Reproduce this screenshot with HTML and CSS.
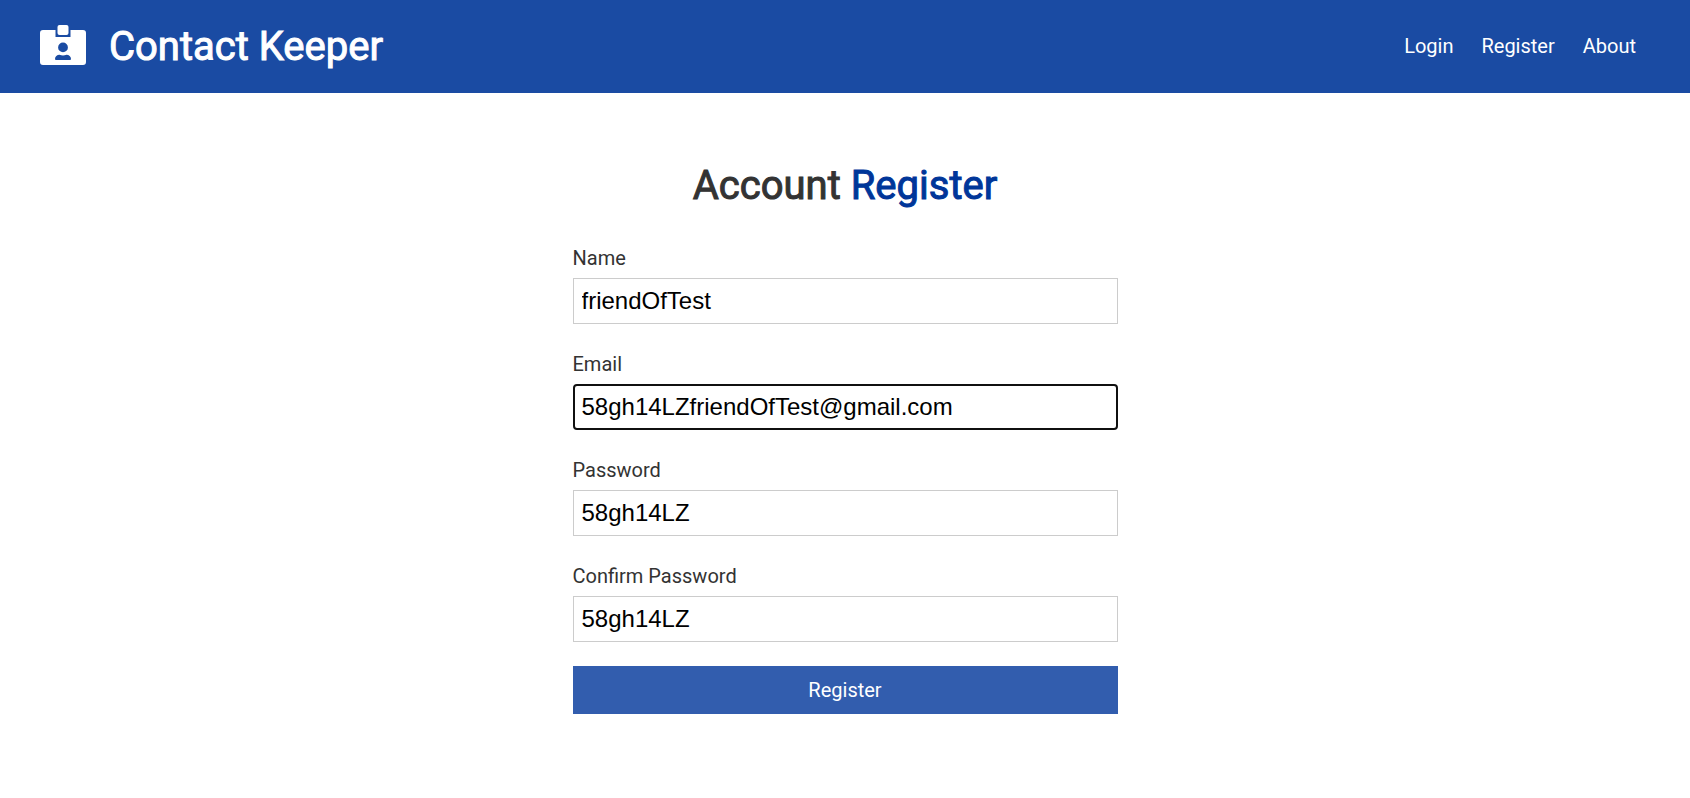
FILE: index.html
```html
<!DOCTYPE html>
<html lang="en">
<head>
<meta charset="utf-8">
<title>Contact Keeper</title>
<link rel="stylesheet" href="styles.css">
</head>
<body>
<header class="navbar">
  <h1 class="brand">
    <svg class="brand-icon" viewBox="0 0 46 43" aria-hidden="true">
      <path fill="currentColor" fill-rule="evenodd" d="M3 5H15.500V12H30.500V5H43Q46 5 46 8V37Q46 40 43 40H3Q0 40 0 37V8Q0 5 3 5ZM23 17.500A4.900 4.900 0 1 0 23 27.300A4.900 4.900 0 1 0 23 17.500ZM16 35H30Q31 35 31 34C31 31.500 29 29.800 26.500 29.800Q23 31.300 19.500 29.800C17 29.800 15 31.500 15 34Q15 35 16 35Z"/>
      <rect fill="currentColor" x="17.500" y="0" width="11" height="10" rx="2"/>
    </svg>
    <span>Contact Keeper</span>
  </h1>
  <nav>
    <ul class="nav-list">
      <li><a href="#login">Login</a></li>
      <li><a href="#register">Register</a></li>
      <li><a href="#about">About</a></li>
    </ul>
  </nav>
</header>
<main class="form-container">
  <h2 class="title">Account <span class="text-primary">Register</span></h2>
  <form>
    <div class="form-group">
      <label for="name">Name</label>
      <input id="name" type="text" value="friendOfTest">
    </div>
    <div class="form-group">
      <label for="email">Email</label>
      <input id="email" class="is-active" type="email" value="58gh14LZfriendOfTest@gmail.com">
    </div>
    <div class="form-group">
      <label for="password">Password</label>
      <input id="password" type="text" value="58gh14LZ">
    </div>
    <div class="form-group">
      <label for="password2">Confirm Password</label>
      <input id="password2" type="text" value="58gh14LZ">
    </div>
    <button class="btn" type="submit">Register</button>
  </form>
</main>
</body>
</html>
```
FILE: styles.css
```css
* { box-sizing: border-box; margin: 0; padding: 0; }
body { font-family: Roboto, sans-serif; font-size: 20px; line-height: 32px; color: #333; background: #fff; }
.navbar { display: flex; align-items: center; justify-content: space-between; padding: 22px 40px; background: #1a4ba3; color: #fff; }
.brand { display: flex; align-items: center; gap: 23px; font-size: 40px; line-height: 49px; font-weight: 400; -webkit-text-stroke: 1px currentColor; }
.brand-icon { width: 46px; height: 43px; stroke: none; }
.nav-list { display: flex; list-style: none; line-height: 31px; }
.nav-list a { padding: 8px 14px; color: #fff; text-decoration: none; }
.form-container { max-width: 545px; margin: 64px auto; }
.title { margin-bottom: 27px; font-size: 40px; line-height: 58px; font-weight: 400; text-align: center; -webkit-text-stroke: 1px currentColor; }
.text-primary { color: #003699; }
.form-group { margin: 24px 0; }
.form-group label { display: block; }
.form-group input { display: block; width: 100%; height: 46px; margin-top: 4px; padding: 8px; border: 1px solid #ccc; background: #fff; color: #000; font: 24px "Liberation Sans", Arial, sans-serif; }
.form-group input.is-active { border: 2px solid #101010; border-radius: 4px; padding: 7px; }
.btn { display: block; width: 100%; padding: 8px 20px; border: 0; background: #325dae; color: #fff; font: 400 20px/32px Roboto, sans-serif; }
```
